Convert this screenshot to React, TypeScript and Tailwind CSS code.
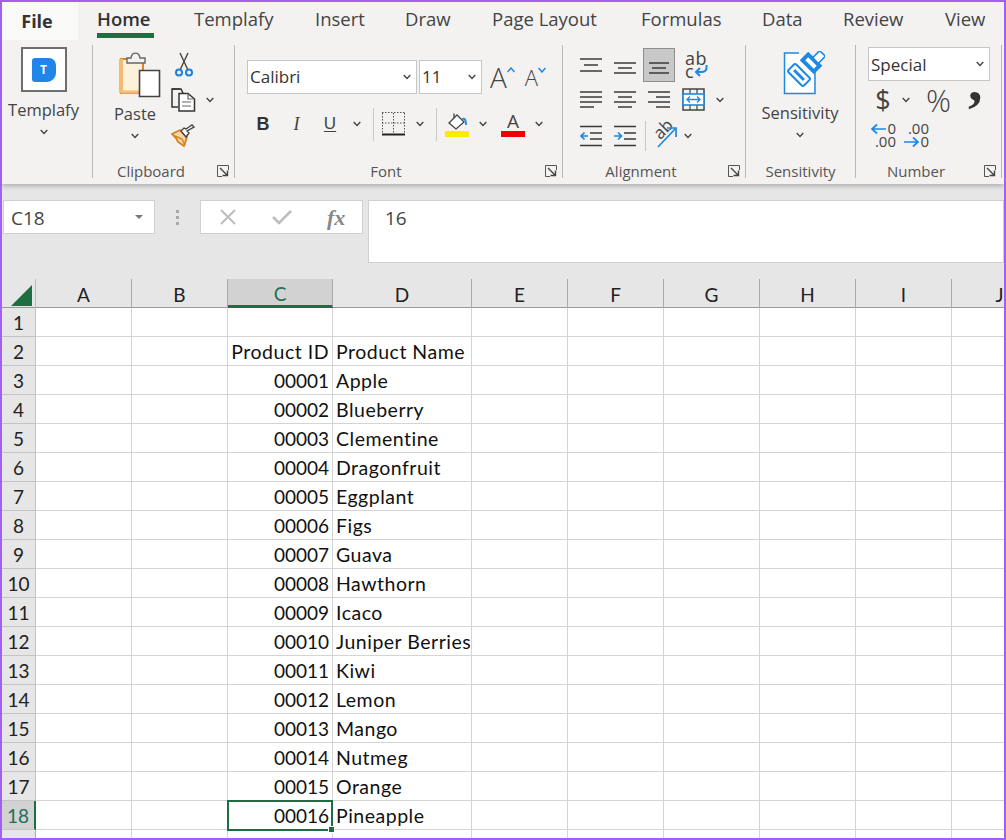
import type { ReactNode } from "react";

const tabs = [
  { label: "Home", cls: "w-[97px] font-semibold text-[#333]" },
  { label: "Templafy", cls: "w-[121px]" },
  { label: "Insert", cls: "w-[90px]" },
  { label: "Draw", cls: "w-[87px]" },
  { label: "Page Layout", cls: "w-[149px]" },
  { label: "Formulas", cls: "w-[121px]" },
  { label: "Data", cls: "w-[81px]" },
  { label: "Review", cls: "w-[102px]" },
  { label: "View", cls: "w-[50px]" },
];

const products = [
  ["", ""],
  ["Product ID", "Product Name"],
  ["00001", "Apple"],
  ["00002", "Blueberry"],
  ["00003", "Clementine"],
  ["00004", "Dragonfruit"],
  ["00005", "Eggplant"],
  ["00006", "Figs"],
  ["00007", "Guava"],
  ["00008", "Hawthorn"],
  ["00009", "Icaco"],
  ["00010", "Juniper Berries"],
  ["00011", "Kiwi"],
  ["00012", "Lemon"],
  ["00013", "Mango"],
  ["00014", "Nutmeg"],
  ["00015", "Orange"],
  ["00016", "Pineapple"],
];

const columns = ["A", "B", "C", "D", "E", "F", "G", "H", "I", "J"];
const gridCols = "grid grid-cols-[34px_96px_96px_105px_139px_96px_96px_96px_96px_96px_96px]";

function Chevron({ className = "" }: { className?: string }) {
  return (
    <svg width="8" height="6" viewBox="0 0 8 6" className={`shrink-0 ${className}`}>
      <path d="M0.7 1 L4 4.4 L7.3 1" fill="none" stroke="#444" strokeWidth="1.4" />
    </svg>
  );
}

function Launcher() {
  return (
    <svg width="12" height="12" viewBox="0 0 12 12" className="shrink-0">
      <path d="M11.5 5V0.5H0.5V11.5H5" fill="none" stroke="#555" strokeWidth="1" />
      <path d="M3 3L10 10M5.5 10.5H10.5V5.5" fill="none" stroke="#444" strokeWidth="1.4" />
    </svg>
  );
}

function Group({ w, label, pad, launcher = true, children }: { w: string; label: string; pad: string; launcher?: boolean; children: ReactNode }) {
  return (
    <div className={`${w} h-[133px] flex flex-col border-r border-[#b8b8b8] shrink-0`}>
      <div className="flex-1 min-h-0">{children}</div>
      <div className="h-[14px] flex items-center text-[15px] text-[#555]">
        <span className={`flex-1 text-center ${pad}`}>{label}</span>
        {launcher && <span className="mr-[5px] flex"><Launcher /></span>}
      </div>
    </div>
  );
}

// three or more horizontal strokes used by the alignment buttons
function Lines({ rows }: { rows: number[][] }) {
  return (
    <svg width="22" height="22" viewBox="0 0 22 22">
      {rows.map((r, i) => (
        <line key={i} x1={r[0]} x2={r[1]} y1={r[2]} y2={r[2]} stroke="#3a3a3a" strokeWidth="1.5" />
      ))}
    </svg>
  );
}

function IndentIcon({ right }: { right?: boolean }) {
  return (
    <svg width="22" height="22" viewBox="0 0 22 22">
      <path d="M0 1.5H22M0 20.5H22M10 8H22M10 14H22" stroke="#3a3a3a" strokeWidth="1.4" fill="none" />
      {right ? (
        <path d="M0 11H7M4 7.5L7.5 11L4 14.5" stroke="#1e88e5" strokeWidth="1.7" fill="none" />
      ) : (
        <path d="M1 11H8M4.5 7.5L1 11L4.5 14.5" stroke="#1e88e5" strokeWidth="1.7" fill="none" />
      )}
    </svg>
  );
}

function TemplafyIcon() {
  return (
    <div className="w-[46px] h-[45px] border-2 border-[#6e6e6e] bg-white flex items-center justify-center">
      <div className="w-[24px] h-[24px] bg-[#1f85e8] rounded-tl-[3px] rounded-tr-[7px] rounded-bl-[3px] rounded-br-[9px] flex items-center justify-center text-white text-[12px] font-bold">T</div>
    </div>
  );
}

function PasteIcon() {
  return (
    <svg width="42" height="46" viewBox="0 0 42 46">
      <path d="M2 7H24V41H2Z" fill="#fdf1dc" stroke="#d9862a" strokeWidth="2" />
      <path d="M2 41V7" stroke="#f2bd73" strokeWidth="4" />
      <path d="M2 40H20" stroke="#f2bd73" strokeWidth="3" />
      <path d="M8 11V6H12C13 -0.5 20 -0.5 21 6H26V11Z" fill="#f3f2f1" stroke="#666" strokeWidth="1.4" />
      <path d="M20.5 18.5H40.5V44.5H20.5Z" fill="#fff" stroke="#444" strokeWidth="1.6" />
    </svg>
  );
}

function ScissorsIcon() {
  return (
    <svg width="18" height="25" viewBox="0 0 18 25">
      <path d="M13 1L5.5 17M5 1L12.5 17" stroke="#444" strokeWidth="1.4" fill="none" />
      <circle cx="4" cy="20.5" r="3" fill="none" stroke="#1e7fd6" strokeWidth="2" />
      <circle cx="14" cy="20.5" r="3" fill="none" stroke="#1e7fd6" strokeWidth="2" />
    </svg>
  );
}

function CopyIcon() {
  return (
    <svg width="25" height="24" viewBox="0 0 25 24">
      <path d="M9 1H1V19H7" fill="none" stroke="#333" strokeWidth="1.5" />
      <path d="M1 1H10L12 5" fill="none" stroke="#333" strokeWidth="1.5" />
      <path d="M8 5.5H17L23.5 11V23H8Z" fill="#fff" stroke="#333" strokeWidth="1.5" />
      <path d="M17 5.5V11H23.5M11 14H20M11 18H20" fill="none" stroke="#666" strokeWidth="1.2" />
    </svg>
  );
}

function BrushIcon() {
  return (
    <svg width="25" height="23" viewBox="0 0 25 23">
      <path d="M1 10L9 6L16 13L13 22L7 18L5 14Z" fill="#f8d5a5" stroke="#d9801e" strokeWidth="1.8" />
      <path d="M4 12L11 15L14 21" stroke="#d9801e" strokeWidth="1.4" fill="none" />
      <path d="M10 7L15 13L18 9L16 7L23 3L21 1L15 5L13 4Z" fill="#fff" stroke="#444" strokeWidth="1.4" />
    </svg>
  );
}

function BorderIcon() {
  return (
    <svg width="23" height="24" viewBox="0 0 23 24">
      <path d="M0.5 1V21M11.5 1V21M22.5 1V21M0 0.5H23M0 11H23" stroke="#555" strokeWidth="1" strokeDasharray="1.5 1.5" fill="none" />
      <path d="M0 22.5H23" stroke="#222" strokeWidth="2" />
    </svg>
  );
}

function FillIcon() {
  return (
    <svg width="24" height="25" viewBox="0 0 24 25">
      <path d="M4 11L12 3L19 10L11 17Z" fill="#fff" stroke="#444" strokeWidth="1.3" />
      <path d="M9 6V1.5" stroke="#444" strokeWidth="1.3" />
      <path d="M17 8C19 5 21 7 21 13" fill="none" stroke="#1e88e5" strokeWidth="1.8" />
      <rect x="0" y="19" width="24" height="6" fill="#ffeb00" />
    </svg>
  );
}

function WrapIcon() {
  return (
    <div className="relative w-[24px] h-[26px] text-[18px] leading-[13px] text-[#444]">
      <div className="tracking-[0.5px]">ab</div>
      <div>c</div>
      <svg width="14" height="13" viewBox="0 0 14 13" className="absolute left-[9px] top-[12px]">
        <path d="M12.5 1V3.5C12.5 7 10 8 7 8H2M6 4L2 8L6 12" fill="none" stroke="#1e88e5" strokeWidth="2" />
      </svg>
    </div>
  );
}

function MergeIcon() {
  return (
    <svg width="23" height="23" viewBox="0 0 23 23">
      <rect x="1" y="1" width="21" height="21" fill="none" stroke="#444" strokeWidth="1.5" />
      <path d="M8 1V6M15 1V6M8 17V22M15 17V22" stroke="#444" strokeWidth="1.2" />
      <rect x="1" y="6" width="21" height="11" fill="#fff" stroke="#1e88e5" strokeWidth="1.6" />
      <path d="M5 11.5H18M8 8.5L5 11.5L8 14.5M15 8.5L18 11.5L15 14.5" fill="none" stroke="#1e88e5" strokeWidth="1.3" />
    </svg>
  );
}

function OrientationIcon() {
  return (
    <div className="relative w-[26px] h-[24px]">
      <span className="absolute left-[-1px] top-[-5px] text-[17px] leading-[20px] text-[#444] rotate-[-45deg]">ab</span>
      <svg width="26" height="24" viewBox="0 0 26 24" className="absolute left-0 top-0">
        <path d="M4 23L21 5M13 4H22V13" fill="none" stroke="#1e88e5" strokeWidth="1.7" />
      </svg>
    </div>
  );
}

function SensitivityIcon() {
  return (
    <svg width="42" height="45" viewBox="0 0 42 45">
      <path d="M16 2H1.5V42.5H32V20" fill="#fff" stroke="#1e88e5" strokeWidth="1.5" />
      <g transform="rotate(45 16 24)">
        <rect x="5" y="18.5" width="22" height="11" rx="2" fill="#fff" stroke="#1e88e5" strokeWidth="2" />
        <rect x="9" y="22.5" width="14" height="3" fill="#1e88e5" />
      </g>
      <g transform="rotate(45 28 12)">
        <rect x="18" y="6" width="20" height="12" fill="#1e88e5" />
        <rect x="22" y="10" width="12" height="4" fill="#fff" />
      </g>
      <g transform="rotate(45 36 6)">
        <rect x="32" y="1" width="8" height="10" fill="#fff" stroke="#1e88e5" strokeWidth="1.6" />
      </g>
    </svg>
  );
}

function DecimalIcon({ more }: { more?: boolean }) {
  return (
    <div className="relative w-[25px] h-[26px] text-[#444] text-[15px] leading-[13px] font-['Open_Sans',sans-serif]">
      <div className="text-right">{more ? ".00" : "0"}</div>
      <div className="text-right">{more ? "0" : ".00"}</div>
      <svg width="15" height="12" viewBox="0 0 15 12" className={more ? "absolute left-0 bottom-0" : "absolute left-0 top-[1px]"}>
        {more ? (
          <path d="M0 6H14M9 1.5L14 6L9 10.5" fill="none" stroke="#1e88e5" strokeWidth="1.7" />
        ) : (
          <path d="M15 6H1M6 1.5L1 6L6 10.5" fill="none" stroke="#1e88e5" strokeWidth="1.7" />
        )}
      </svg>
    </div>
  );
}

function Select({ w, text, textCls = "text-[#333]" }: { w: string; text: string; textCls?: string }) {
  return (
    <div className={`${w} h-[34px] bg-white border border-[#c6c6c6] flex items-center pl-[2px] pr-[5px] justify-between`}>
      <span className={`text-[17px] ${textCls}`}>{text}</span>
      <Chevron />
    </div>
  );
}

function Ribbon() {
  return (
    <div className="relative z-10 h-[182px] bg-[#f3f2f1] shadow-[0_2px_5px_rgba(0,0,0,0.25)] text-[#444] font-['Open_Sans',sans-serif]">
      <div className="h-[43px] flex items-start">
        <div className="w-[76px] h-[38px] bg-[#f9f9f8] flex items-center justify-center pr-[6px] text-[18px] font-bold text-[#333]">File</div>
        <div className="flex ml-[19px]">
          {tabs.map((t, i) => (
            <div key={t.label} className={`${t.cls} h-[36px] text-[18.5px] whitespace-nowrap`}>
              <div className="inline-block h-[36px] leading-[33px]">
                {t.label}
                {i === 0 && <div className="h-[5px] -mt-[2px] w-[57px] bg-[#1d6f42]" />}
              </div>
            </div>
          ))}
        </div>
      </div>

      <div className="flex">
        <Group w="w-[91px]" label="" pad="" launcher={false}>
          <div className="w-[83px] flex flex-col items-center pt-[2px]">
            <TemplafyIcon />
            <div className="text-[16.5px] mt-[5px] leading-[26px]">Templafy</div>
            <Chevron className="mt-[6px]" />
          </div>
        </Group>

        <Group w="w-[142px]" label="Clipboard" pad="pr-[8px]">
          <div className="flex pt-[7px]">
            <div className="ml-[16px] w-[52px] flex flex-col items-center">
              <div className="ml-[10px]"><PasteIcon /></div>
              <div className="text-[16.5px] leading-[26px] mt-[3px]">Paste</div>
              <Chevron className="mt-[6px]" />
            </div>
            <div className="ml-[10px] flex flex-col items-start">
              <div className="ml-[4px]"><ScissorsIcon /></div>
              <div className="flex items-center mt-[11px]">
                <CopyIcon />
                <Chevron className="ml-[10px]" />
              </div>
              <div className="mt-[12px]"><BrushIcon /></div>
            </div>
          </div>
        </Group>

        <Group w="w-[328px]" label="Font" pad="pr-[8px]">
          <div className="pt-[15px]">
            <div className="flex items-center ml-[12px]">
              <Select w="w-[170px]" text="Calibri" />
              <Select w="w-[63px] ml-[2px]" text="11" />
              <span className="ml-[8px] text-[28px] font-light leading-[34px] text-[#444]">A</span>
              <svg width="8" height="6" viewBox="0 0 8 6" className="mb-[14px]"><path d="M0.5 5L4 1L7.5 5" fill="none" stroke="#1e88e5" strokeWidth="1.5" /></svg>
              <span className="ml-[10px] text-[22px] font-light leading-[34px] text-[#444]">A</span>
              <svg width="8" height="6" viewBox="0 0 8 6" className="mb-[14px]"><path d="M0.5 1L4 5L7.5 1" fill="none" stroke="#1e88e5" strokeWidth="1.5" /></svg>
            </div>
            <div className="flex items-center h-[24px] mt-[18px] ml-[11px]">
              <span className="w-[34px] text-center text-[18px] font-bold font-['Liberation_Sans',sans-serif] text-[#333]">B</span>
              <span className="w-[33px] text-center text-[18px] italic font-['Liberation_Serif',serif]">I</span>
              <span className="w-[34px] text-center text-[17px] underline underline-offset-2 font-['Liberation_Sans',sans-serif]">U</span>
              <span className="w-[20px] flex justify-center"><Chevron /></span>
              <span className="w-px h-[33px] bg-[#c8c8c8] ml-[6px]" />
              <span className="ml-[8px] flex"><BorderIcon /></span>
              <Chevron className="ml-[11px]" />
              <span className="w-px h-[33px] bg-[#c8c8c8] ml-[12px]" />
              <span className="ml-[8px] flex"><FillIcon /></span>
              <Chevron className="ml-[10px]" />
              <span className="ml-[14px] w-[24px] h-[25px] flex flex-col items-center justify-end">
                <span className="text-[19px] leading-[19px]">A</span>
                <span className="w-[24px] h-[6px] bg-[#f00000] shrink-0" />
              </span>
              <Chevron className="ml-[10px]" />
            </div>
          </div>
        </Group>

        <Group w="w-[183px]" label="Alignment" pad="pr-[9px]">
          <div className="pt-[3px] pl-[12px]">
            <div className="flex items-center h-[34px]">
              <span className="w-[34px] flex justify-center pr-[2px]"><Lines rows={[[0, 22, 5], [4, 18, 11], [0, 22, 17]]} /></span>
              <span className="w-[34px] flex justify-center pr-[2px] pt-[1px]"><Lines rows={[[0, 22, 8], [4, 18, 13], [0, 22, 18]]} /></span>
              <span className="w-[32px] h-[34px] flex justify-center items-center bg-[#c8c8c8] border border-[#8e8e8e]"><Lines rows={[[1, 21, 9], [4, 18, 14], [1, 21, 19]]} /></span>
              <span className="ml-[10px] flex"><WrapIcon /></span>
            </div>
            <div className="flex items-center h-[35px]">
              <span className="w-[34px] flex justify-center pr-[2px]"><Lines rows={[[0, 22, 3], [0, 22, 8], [0, 22, 13], [0, 14, 18]]} /></span>
              <span className="w-[34px] flex justify-center pr-[2px]"><Lines rows={[[0, 22, 3], [4, 18, 8], [0, 22, 13], [4, 18, 18]]} /></span>
              <span className="w-[34px] flex justify-center pr-[2px]"><Lines rows={[[0, 22, 3], [8, 22, 8], [0, 22, 13], [8, 22, 18]]} /></span>
              <span className="ml-[5px] flex"><MergeIcon /></span>
              <Chevron className="ml-[11px]" />
            </div>
            <div className="flex items-center h-[35px] pt-[2px]">
              <span className="w-[34px] flex justify-center pr-[2px]"><IndentIcon /></span>
              <span className="w-[34px] flex justify-center pr-[2px]"><IndentIcon right /></span>
              <span className="w-px h-[30px] bg-[#c8c8c8] ml-[2px]" />
              <span className="ml-[8px] flex"><OrientationIcon /></span>
              <Chevron className="ml-[4px]" />
            </div>
          </div>
        </Group>

        <Group w="w-[110px]" label="Sensitivity" pad="" launcher={false}>
          <div className="w-[108px] flex flex-col items-center pt-[6px]">
            <div className="ml-[7px]"><SensitivityIcon /></div>
            <div className="text-[16.5px] leading-[26px] mt-[4px]">Sensitivity</div>
            <Chevron className="mt-[6px]" />
          </div>
        </Group>

        <Group w="w-[146px]" label="Number" pad="pr-[8px]">
          <div className="pt-[2px] pl-[12px]">
            <Select w="w-[122px]" text="Special" textCls="text-[#333] pt-[2px]" />
            <div className="flex items-center h-[36px] mt-[1px]">
              <span className="ml-[7px] text-[27px] leading-[36px] w-[16px] text-center">$</span>
              <Chevron className="ml-[11px]" />
              <span className="ml-[16px] text-[31px] font-light leading-[36px]">%</span>
              <span className="ml-[17px] w-[14px] h-[36px] -translate-y-[13px] text-[58px] leading-[24px] font-bold font-['Liberation_Serif',serif] text-[#333]">,</span>
            </div>
            <div className="flex items-center mt-[4px] ml-[3px]">
              <DecimalIcon />
              <span className="ml-[8px]"><DecimalIcon more /></span>
            </div>
          </div>
        </Group>
      </div>
    </div>
  );
}

function FormulaBar() {
  return (
    <div className="h-[95px] bg-[#e6e6e6] flex items-start pt-[16px] font-['Open_Sans',sans-serif] text-[#444]">
      <div className="ml-[1px] w-[153px] h-[34px] bg-white border border-[#d0d0d0] flex items-center pl-[7px] pr-[11px] justify-between text-[19px] leading-[34px]">
        <span className="pt-[1px]">C18</span>
        <span className="w-0 h-0 border-x-[4px] border-x-transparent border-t-[4px] border-t-[#777]" />
      </div>
      <div className="w-[45px] h-[34px] flex flex-col items-center justify-center gap-[3px] pt-[1px]">
        <span className="w-[3px] h-[3px] bg-[#a8a8a8]" />
        <span className="w-[3px] h-[3px] bg-[#a8a8a8]" />
        <span className="w-[3px] h-[3px] bg-[#a8a8a8]" />
      </div>
      <div className="w-[164px] h-[34px] bg-white border border-[#d0d0d0] flex items-center">
        <svg width="16" height="16" viewBox="0 0 16 16" className="ml-[19px]"><path d="M1 1L15 15M15 1L1 15" stroke="#bdbdbd" strokeWidth="2" /></svg>
        <svg width="20" height="16" viewBox="0 0 20 16" className="ml-[36px]"><path d="M1 8L7 14L19 2" fill="none" stroke="#bdbdbd" strokeWidth="2.6" /></svg>
        <span className="ml-[35px] text-[22px] italic font-bold text-[#888] font-['Liberation_Serif',serif]">fx</span>
      </div>
      <div className="ml-[5px] w-[640px] h-[63px] bg-white border border-[#d0d0d0] pl-[16px] pt-[3px] text-[19px]">16</div>
    </div>
  );
}

function Sheet() {
  return (
    <div className="font-['Lato',sans-serif] text-[19px] leading-[22px] text-[#111] bg-white">
      <div className={`${gridCols} h-[29px] bg-[#e6e6e6] border-b border-[#9a9a9a]`}>
        <div className="relative border-r border-[#bbb]">
          <svg width="24" height="24" viewBox="0 0 24 24" className="absolute right-[2px] bottom-[1px]"><path d="M23 2V23H2Z" fill="#1d6f42" /></svg>
        </div>
        {columns.map((c) => (
          <div
            key={c}
            className={
              c === "C"
                ? "flex items-center justify-center pt-[3px] border-r border-[#aaa] bg-[#d2d2d2] text-[#1d6f5a] border-b-[3px] border-b-[#1d6f42] h-[29px]"
                : "flex items-center justify-center pt-[2px] border-r border-[#aaa] text-[#222]"
            }
          >
            {c}
          </div>
        ))}
      </div>
      {products.map((p, i) => {
        const selected = i === 17;
        const isTitle = i === 1;
        return (
          <div key={i} className={`${gridCols} h-[29px]`}>
            <div
              className={
                selected
                  ? "flex items-center justify-center pt-[2px] bg-[#d2d2d2] text-[#1d6f5a] border-r-2 border-r-[#1d6f42] border-b border-[#c4c4c4]"
                  : "flex items-center justify-center pt-[2px] bg-[#e6e6e6] text-[#222] border-r border-[#aaa] border-b border-[#c4c4c4]"
              }
            >
              {i + 1}
            </div>
            {columns.map((c) => (
              <div
                key={c}
                className={
                  c === "C"
                    ? "relative flex items-center justify-end pt-[2px] pr-[3px] border-r border-b border-[#d4d4d4] whitespace-nowrap"
                    : c === "D"
                    ? "flex items-center pt-[2px] pl-[3px] border-r border-b border-[#d4d4d4] whitespace-nowrap text-[19.5px] tracking-[0.5px]"
                    : "border-r border-b border-[#d4d4d4]"
                }
              >
                {c === "C" && (isTitle ? <span className="text-[19.5px] tracking-[0.5px]">{p[0]}</span> : p[0])}
                {c === "D" && p[1]}
                {c === "C" && selected && (
                  <div className="absolute -left-[1px] -top-[1px] w-[106px] h-[31px] border-2 border-[#1d6f42]">
                    <div className="absolute -right-[4px] -bottom-[4px] w-[7px] h-[7px] bg-[#1d6f42] border border-white" />
                  </div>
                )}
              </div>
            ))}
          </div>
        );
      })}
      <div className={`${gridCols} h-[9px]`}>
        <div className="bg-[#e6e6e6] border-r border-[#aaa]" />
        {columns.map((c) => (
          <div key={c} className="border-r border-[#d4d4d4]" />
        ))}
      </div>
    </div>
  );
}

export default function App() {
  return (
    <div className="w-[1006px] h-[840px] border-2 border-[#a35ff0] overflow-hidden bg-[#e6e6e6]">
      <Ribbon />
      <FormulaBar />
      <Sheet />
    </div>
  );
}
